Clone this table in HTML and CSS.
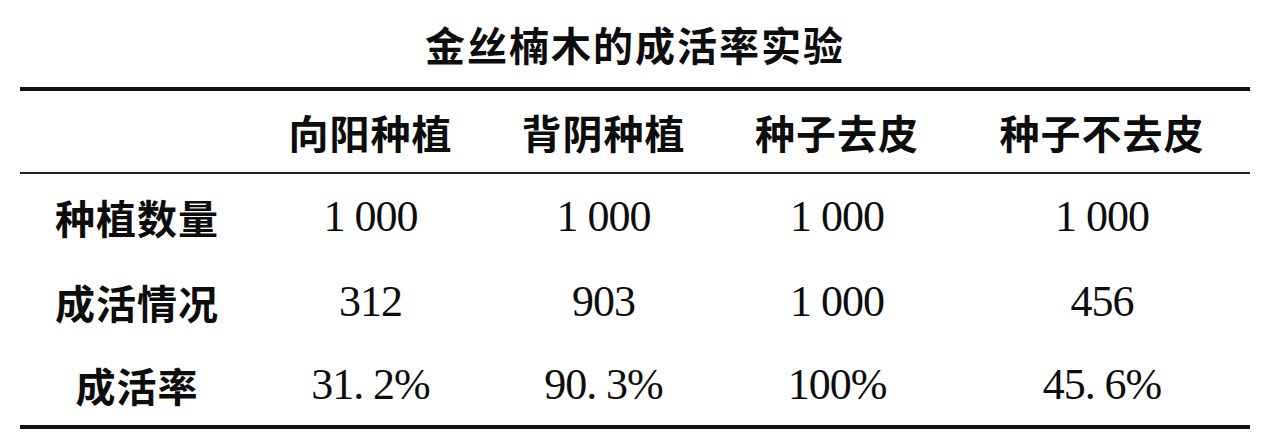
FILE: index.html
```html
<!DOCTYPE html>
<html lang="zh">
<head>
<meta charset="utf-8">
<title>金丝楠木的成活率实验</title>
<link rel="stylesheet" href="styles.css">
</head>
<body>
<div class="page">
  <h1 class="title">金丝楠木的成活率实验</h1>
  <div class="table">
    <div class="row head">
      <div class="cell"></div>
      <div class="cell cjk">向阳种植</div>
      <div class="cell cjk">背阴种植</div>
      <div class="cell cjk">种子去皮</div>
      <div class="cell cjk">种子不去皮</div>
    </div>
    <div class="row r1">
      <div class="cell cjk">种植数量</div>
      <div class="cell num">1 000</div>
      <div class="cell num">1 000</div>
      <div class="cell num">1 000</div>
      <div class="cell num">1 000</div>
    </div>
    <div class="row r2">
      <div class="cell cjk">成活情况</div>
      <div class="cell num">312</div>
      <div class="cell num">903</div>
      <div class="cell num">1 000</div>
      <div class="cell num">456</div>
    </div>
    <div class="row r3">
      <div class="cell cjk">成活率</div>
      <div class="cell num">31<span class="pt">.</span>2%</div>
      <div class="cell num">90<span class="pt">.</span>3%</div>
      <div class="cell num">100%</div>
      <div class="cell num">45<span class="pt">.</span>6%</div>
    </div>
  </div>
</div>
</body>
</html>
```

FILE: styles.css
```css
html, body {
  margin: 0;
  padding: 0;
  background: #ffffff;
}

.page {
  width: 1275px;
  height: 447px;
  padding-left: 20px;
  box-sizing: border-box;
  color: #0d0d0d;
}

.title {
  margin: 0;
  width: 1230px;
  height: 87px;
  display: flex;
  align-items: center;
  justify-content: center;
  font-family: "Noto Sans CJK SC", "Noto Sans", sans-serif;
  font-weight: 700;
  font-size: 40px;
  line-height: 1;
  letter-spacing: 2px;
}

.table {
  width: 1230px;
  border-top: 4px solid #111111;
  border-bottom: 4px solid #111111;
}

.row {
  display: grid;
  grid-template-columns: 234px 233px 233px 234px 296px;
}

.row.head {
  height: 81px;
  border-bottom: 2px solid #222222;
}

.row.r1 { height: 86px; }
.row.r2 { height: 84px; }
.row.r3 { height: 81px; }

.cell {
  display: flex;
  align-items: center;
  justify-content: center;
  line-height: 1;
}

.cjk {
  font-family: "Noto Sans CJK SC", "Noto Sans", sans-serif;
  font-weight: 700;
  font-size: 40px;
  letter-spacing: 1px;
}

.num {
  font-family: "Liberation Serif", "Times New Roman", serif;
  font-size: 44px;
  letter-spacing: -1px;
}

.pt {
  margin-right: 0.22em;
}
```
